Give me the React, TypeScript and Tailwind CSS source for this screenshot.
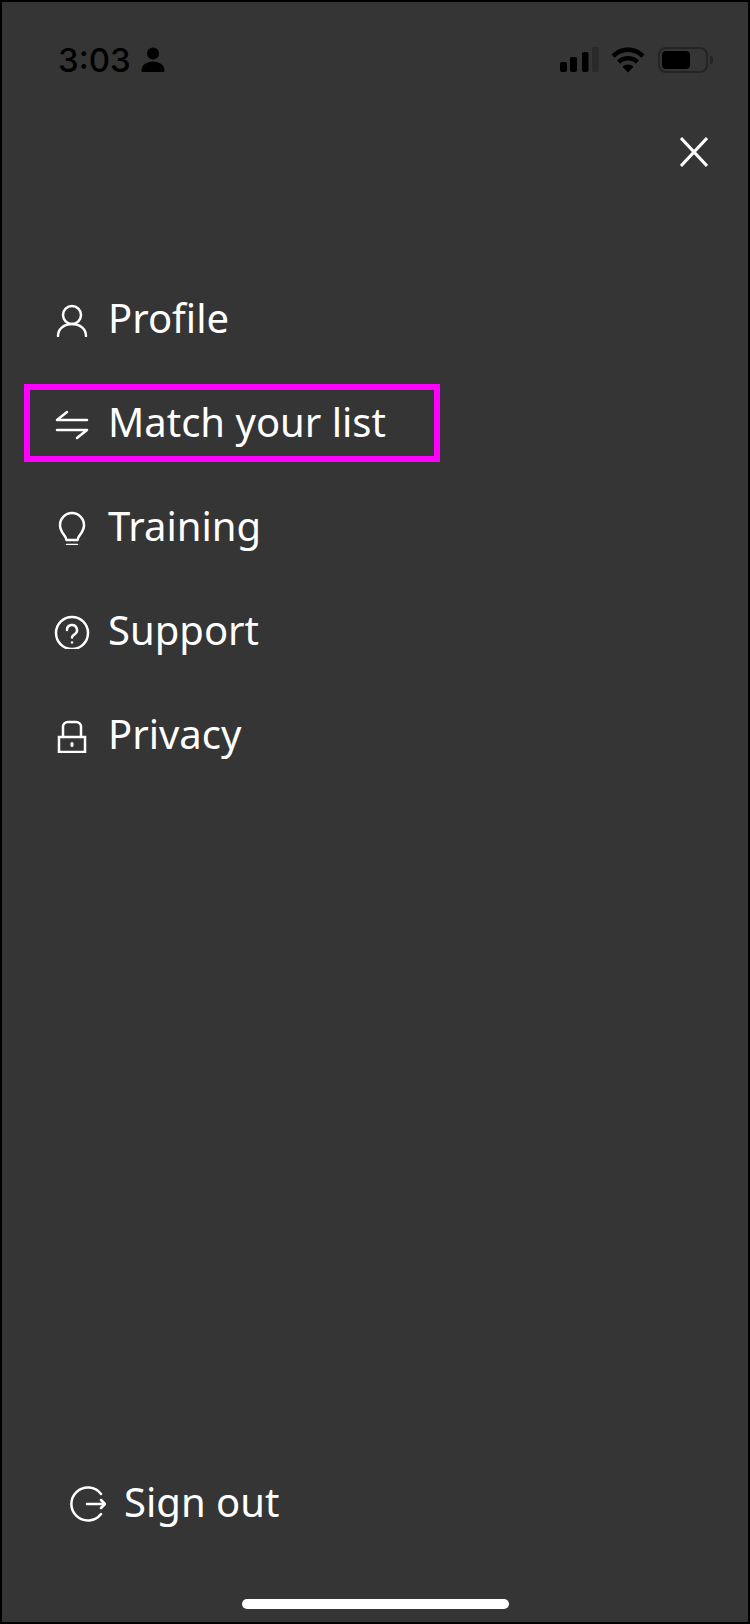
import { ReactNode } from "react";

const iconProps = {
  viewBox: "0 0 36 36",
  fill: "none",
  stroke: "currentColor",
  strokeWidth: 2.5,
  strokeLinecap: "round" as const,
  strokeLinejoin: "round" as const,
  className: "w-9 h-9 shrink-0 text-white",
};

const ProfileIcon = () => (
  <svg {...iconProps}>
    <circle cx="18" cy="14" r="9" />
    <path d="M4 35c0-7 6-12 14-12s14 5 14 12" />
  </svg>
);

const MatchIcon = () => (
  <svg {...iconProps}>
    <path d="M33 15H3l10-8" />
    <path d="M3 25h30l-10 8" />
  </svg>
);

const TrainingIcon = () => (
  <svg {...iconProps}>
    <path d="M12.500 31c0-4-6.500-7-6.500-15a12 12 0 0 1 24 0c0 8-6.500 11-6.500 15z" />
    <path d="M13 36h10" />
  </svg>
);

const SupportIcon = () => (
  <svg {...iconProps}>
    <circle cx="18" cy="20" r="16" />
    <path d="M13 17a5 5 0 1 1 7.500 4.300c-1.600.9-2.500 1.900-2.500 3.200" />
    <path d="M18 29.500v.1" />
  </svg>
);

const PrivacyIcon = () => (
  <svg {...iconProps}>
    <rect x="5" y="20" width="26" height="15" strokeLinejoin="miter" />
    <path d="M9 20V10a5 5 0 0 1 5-5h8a5 5 0 0 1 5 5v10" />
    <path d="M18 26.500v2" strokeWidth={3} />
  </svg>
);

const SignOutIcon = () => (
  <svg {...iconProps}>
    <path d="M31 8a16.500 16.500 0 1 0 0 20" />
    <path d="M17 18h18" />
    <path d="M31 14l4 4-4 4" />
  </svg>
);

const items: { label: string; icon: ReactNode; active?: boolean }[] = [
  { label: "Profile", icon: <ProfileIcon /> },
  { label: "Match your list", icon: <MatchIcon />, active: true },
  { label: "Training", icon: <TrainingIcon /> },
  { label: "Support", icon: <SupportIcon /> },
  { label: "Privacy", icon: <PrivacyIcon /> },
];

const StatusBar = () => (
  <div className="flex items-center h-[28px] mt-[44px] pl-[56px] pr-[35px] text-black">
    <span className="font-['Inter',sans-serif] text-[33px] leading-none font-medium">
      3:03
    </span>
    <svg viewBox="0 0 24 26" className="w-[24px] h-[26px] ml-[10px]" fill="currentColor">
      <circle cx="12" cy="6.500" r="6" />
      <path d="M0.500 24c0-6 5-9.500 11.500-9.500S23.500 18 23.500 24c0 .7-.5 1-1 1h-21c-.5 0-1-.3-1-1z" />
    </svg>
    <svg viewBox="0 0 40 26" className="w-[40px] h-[26px] ml-auto" fill="currentColor">
      <rect x="0" y="15" width="7" height="10" rx="2" />
      <rect x="10" y="10" width="7" height="15" rx="2" />
      <rect x="22" y="5" width="6.500" height="20" rx="2" />
      <rect x="32" y="0" width="6.500" height="25" rx="2" fill="#2a2a2a" />
    </svg>
    <svg viewBox="0 0 34 26" className="w-[34px] h-[26px] ml-[11px]" fill="currentColor">
      <path d="M17 0.500C10.500.5 5 3 .5 7.500l3.200 3.200C7.300 7.200 12 5 17 5s9.700 2.200 13.300 5.700l3.200-3.200C29 3 23.500.5 17 .5z" />
      <path d="M17 9c-4.300 0-8 1.600-11 4.500l3.200 3.200C11.300 14.700 14 13.500 17 13.500s5.700 1.200 7.800 3.200l3.200-3.200C25 10.600 21.300 9 17 9z" />
      <path d="M17 17.500c-2.200 0-4 .8-5.500 2.200L17 25.500l5.500-5.800c-1.500-1.400-3.300-2.200-5.500-2.200z" />
    </svg>
    <div className="flex items-center ml-[13px]">
      <div className="w-[50px] h-[26px] rounded-[8px] border-[2px] border-[#242424] p-[2px]">
        <div className="w-[28px] h-full rounded-[4px] bg-black" />
      </div>
      <div className="w-[3px] h-[8px] ml-[2px] rounded-r-full bg-[#242424]" />
    </div>
  </div>
);

export default function App() {
  return (
    <div className="w-[750px] h-[1624px] flex flex-col border-2 border-black bg-[#353535] text-white font-['Noto_Sans',sans-serif] overflow-hidden">
      <StatusBar />

      <div className="flex justify-end pr-[40px] mt-[63px]">
        <svg viewBox="0 0 28 30" className="w-[28px] h-[30px]" fill="none" stroke="white" strokeWidth="3">
          <path d="M1 1l26 28M27 1L1 29" />
        </svg>
      </div>

      <nav className="flex flex-col gap-[26px] mt-[113px] ml-[22px]">
        {items.map((item) => (
          <div
            key={item.label}
            className={`w-[416px] h-[78px] flex items-center gap-[18px] pl-[24px] border-[6px] ${
              item.active ? "border-[#ff00ff]" : "border-transparent"
            }`}
          >
            {item.icon}
            <span className="text-[40px] leading-none pb-[3px]">{item.label}</span>
          </div>
        ))}
      </nav>

      <div className="mt-auto flex items-center gap-[18px] pl-[68px] h-[40px]">
        <SignOutIcon />
        <span className="text-[40px] leading-none pb-[5px]">Sign out</span>
      </div>

      <div className="flex justify-center mt-[75px] mb-[13px]">
        <div className="w-[267px] h-[10px] rounded-full bg-white" />
      </div>
    </div>
  );
}
